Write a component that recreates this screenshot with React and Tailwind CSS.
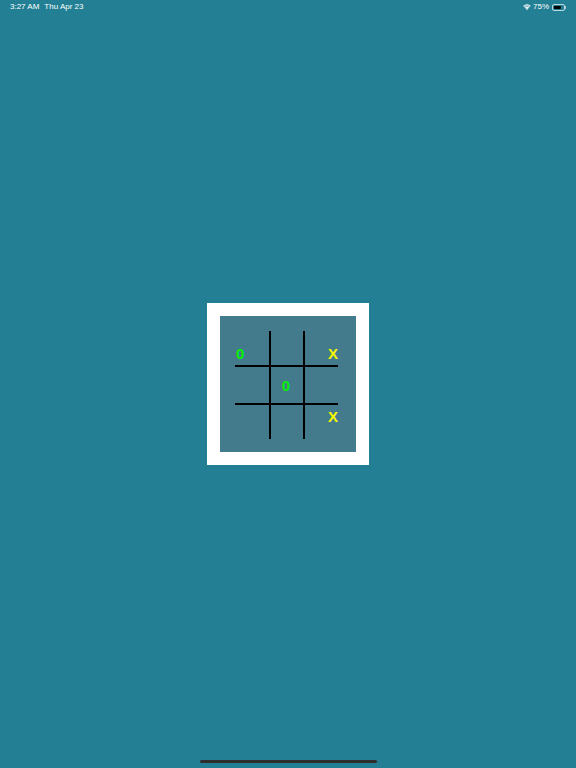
import React from 'react';

const board = [
  ['0', '', 'X'],
  ['', '0', ''],
  ['', '', 'X'],
];

// cell box sizes incl. grid line borders
const cellClass = [
  [
    'w-[36px] h-[36px] border-r-2 border-b-2 flex items-end justify-start pl-[1px] pb-[4px]',
    'w-[34px] h-[36px] border-r-2 border-b-2',
    'w-[33px] h-[36px] border-b-2 flex items-end justify-end pb-[4px]',
  ],
  [
    'w-[36px] h-[38px] border-r-2 border-b-2',
    'w-[34px] h-[38px] border-r-2 border-b-2 flex items-center justify-center pr-[2px]',
    'w-[33px] h-[38px] border-b-2',
  ],
  [
    'w-[36px] h-[34px] border-r-2',
    'w-[34px] h-[34px] border-r-2',
    'w-[33px] h-[34px] flex items-start justify-end pt-[4px]',
  ],
];

const Mark = ({ value }) => {
  if (!value) return null;
  return (
    <span
      className={`text-[15px] font-bold leading-none ${value === 'X' ? 'text-[#f8f800]' : 'text-[#08f008]'}`}
      style={{ fontFamily: '"Liberation Sans", Arial, sans-serif' }}
    >
      {value}
    </span>
  );
};

const StatusBar = () => (
  <div
    className="h-[14px] flex items-center justify-between pl-[10px] pr-[10px] text-white text-[8px]"
    style={{ fontFamily: '"Liberation Sans", Arial, sans-serif' }}
  >
    <div className="flex gap-[5px]">
      <span>3:27 AM</span>
      <span>Thu Apr 23</span>
    </div>
    <div className="flex items-center gap-[2px]">
      <svg width="8" height="6" viewBox="0 0 16 12" fill="white">
        <path d="M8 12 L5.6 9.4 A3.4 3.4 0 0 1 10.4 9.4 Z" />
        <path d="M3.9 7.6 A5.9 5.9 0 0 1 12.1 7.6 L11 8.8 A4.3 4.3 0 0 0 5 8.8 Z" />
        <path d="M2.1 5.7 A8.5 8.5 0 0 1 13.9 5.7 L12.8 6.9 A6.9 6.9 0 0 0 3.2 6.9 Z" />
        <path d="M0.3 3.8 A11 11 0 0 1 15.7 3.8 L14.6 5 A9.5 9.5 0 0 0 1.4 5 Z" />
      </svg>
      <span>75%</span>
      <div className="flex items-center ml-[1px]">
        <div className="w-[13px] h-[7px] rounded-[2px] border border-white/70 p-[1px] flex">
          <div className="w-[75%] h-full bg-black rounded-[1px]" />
        </div>
        <div className="w-[1px] h-[3px] bg-white/70 rounded-r-sm" />
      </div>
    </div>
  </div>
);

const App = () => {
  return (
    <div className="w-[576px] h-[768px] bg-[#237f93] flex flex-col overflow-hidden">
      <StatusBar />
      <div className="flex-1 flex items-center justify-center">
        <div className="bg-white p-[13px]">
          <div className="w-[136px] h-[136px] bg-[#437b8c] pl-[15px] pt-[15px]">
            <div className="flex flex-col">
              {board.map((row, r) => (
                <div key={r} className="flex">
                  {row.map((v, c) => (
                    <div key={c} className={`${cellClass[r][c]} border-black box-border`}>
                      <Mark value={v} />
                    </div>
                  ))}
                </div>
              ))}
            </div>
          </div>
        </div>
      </div>
      <div className="h-[14px] flex justify-center pt-[6px]">
        <div className="w-[177px] h-[3px] rounded-full bg-[#2e2e2e]" />
      </div>
    </div>
  );
};

export default App;
